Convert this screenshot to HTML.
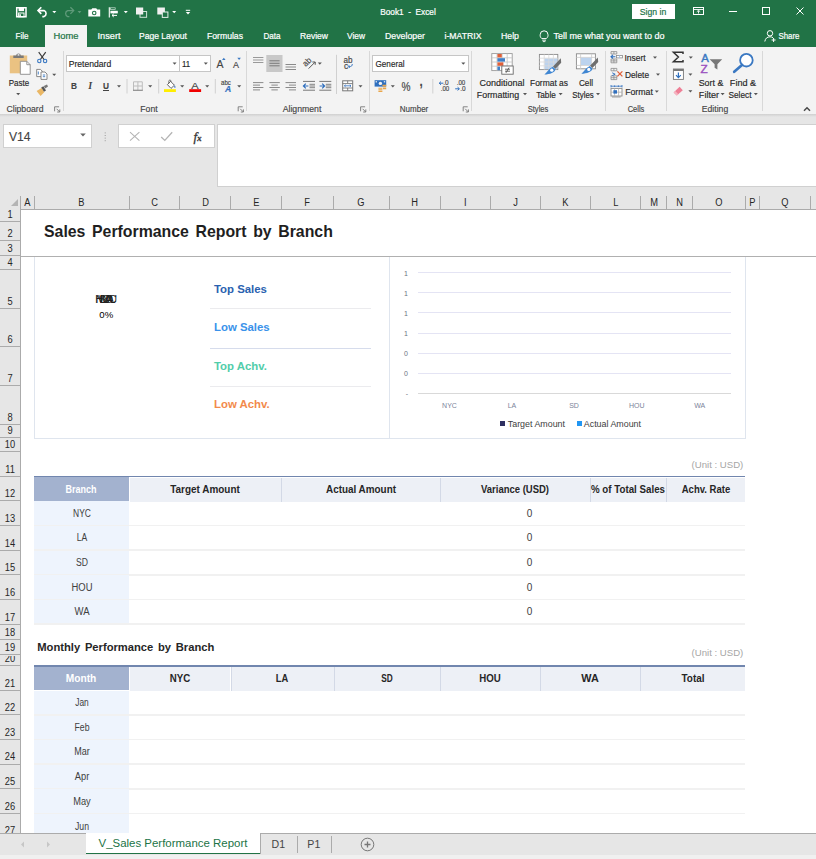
<!DOCTYPE html><html><head><meta charset="utf-8"><title>Book1 - Excel</title><style>
*{box-sizing:border-box;margin:0;padding:0}
html,body{width:816px;height:859px;overflow:hidden;background:#fff}
body{font-family:"Liberation Sans",sans-serif;position:relative;color:#262626}
.a{position:absolute;white-space:nowrap}
.t{position:absolute;white-space:nowrap;line-height:1;transform-origin:0 50%}
.c{position:absolute;white-space:nowrap;line-height:1;text-align:center}
.rb{font-size:8.6px;color:#262626;-webkit-text-stroke:0.15px currentColor}
.tab{font-size:8.6px;color:#fff;-webkit-text-stroke:0.2px currentColor}
.colh{position:absolute;top:195.6px;height:14px;font-size:10px;color:#262626;text-align:center;line-height:14px;border-right:1px solid #ababab}
.rowh{position:absolute;left:0;width:21px;font-size:10px;color:#262626;text-align:center;border-bottom:1px solid #ababab;overflow:hidden}
.rowh span{position:absolute;left:0;width:20px;bottom:1.1px;line-height:1;transform:scaleX(.93)}
.sx{display:inline-block;transform:scaleX(.93)}
.hd{position:absolute;background:#edf0f6}
.hdt{font-size:10px;font-weight:bold;color:#262626}
.bc{position:absolute;background:#eef4fd}
.bct{font-size:10px;color:#404040}
</style></head><body>
<div class="a" style="left:0;top:0;width:816px;height:47px;background:#217346"></div>
<div class="a" style="left:45px;top:25px;width:42px;height:23px;background:#f3f3f3"></div>
<div class="a" style="left:0;top:47px;width:816px;height:68px;background:#f3f3f3;border-bottom:1px solid #d4d4d4"></div>
<div class="a" style="left:0;top:115px;width:816px;height:94px;background:#e6e6e6"></div>
<div class="a" style="left:0;top:113.8px;width:816px;height:3.2px;background:linear-gradient(#d0d0d0,#e6e6e6)"></div>
<div class="c tab" style="left:307.75px;width:200px;top:12px;transform:translateY(-50%) scaleX(0.96);">Book1&nbsp; -&nbsp; Excel</div>
<div class="a" style="left:632px;top:4px;width:43px;height:15px;background:#fff"></div>
<div class="c tab" style="left:552.95px;width:200px;top:11.5px;transform:translateY(-50%) scaleX(0.903);color:#217346;font-size:9.6px">Sign in</div>
<div class="c tab" style="left:-78.5px;width:200px;top:36px;transform:translateY(-50%) scaleX(0.938);color:#fff">File</div>
<div class="c tab" style="left:-34.5px;width:200px;top:36px;transform:translateY(-50%) scaleX(1.09);color:#217346">Home</div>
<div class="c tab" style="left:8.5px;width:200px;top:36px;transform:translateY(-50%) scaleX(1.07);color:#fff">Insert</div>
<div class="c tab" style="left:63.0px;width:200px;top:36px;transform:translateY(-50%) scaleX(0.994);color:#fff">Page Layout</div>
<div class="c tab" style="left:125.0px;width:200px;top:36px;transform:translateY(-50%) scaleX(1.005);color:#fff">Formulas</div>
<div class="c tab" style="left:171.5px;width:200px;top:36px;transform:translateY(-50%) scaleX(0.936);color:#fff">Data</div>
<div class="c tab" style="left:214.0px;width:200px;top:36px;transform:translateY(-50%) scaleX(0.993);color:#fff">Review</div>
<div class="c tab" style="left:256.0px;width:200px;top:36px;transform:translateY(-50%) scaleX(0.974);color:#fff">View</div>
<div class="c tab" style="left:305.0px;width:200px;top:36px;transform:translateY(-50%) scaleX(1.021);color:#fff">Developer</div>
<div class="c tab" style="left:362.5px;width:200px;top:36px;transform:translateY(-50%) scaleX(1.011);color:#fff">i-MATRIX</div>
<div class="c tab" style="left:410.0px;width:200px;top:36px;transform:translateY(-50%) scaleX(1.018);color:#fff">Help</div>
<div class="c tab" style="left:508.5px;width:200px;top:36px;transform:translateY(-50%) scaleX(1.047);color:#fff">Tell me what you want to do</div>
<div class="c tab" style="left:688.5px;width:200px;top:36px;transform:translateY(-50%) scaleX(0.916);color:#fff">Share</div>
<div class="c rb" style="left:-74.55px;width:200px;top:109px;transform:translateY(-50%) scaleX(1.008);color:#444">Clipboard</div>
<div class="c rb" style="left:48.650000000000006px;width:200px;top:109px;transform:translateY(-50%) scaleX(1.006);color:#444">Font</div>
<div class="c rb" style="left:202.14999999999998px;width:200px;top:109px;transform:translateY(-50%) scaleX(1.013);color:#444">Alignment</div>
<div class="c rb" style="left:314.3px;width:200px;top:109px;transform:translateY(-50%) scaleX(0.935);color:#444">Number</div>
<div class="c rb" style="left:438.15px;width:200px;top:109px;transform:translateY(-50%) scaleX(0.884);color:#444">Styles</div>
<div class="c rb" style="left:535.65px;width:200px;top:109px;transform:translateY(-50%) scaleX(0.874);color:#444">Cells</div>
<div class="c rb" style="left:614.8px;width:200px;top:109px;transform:translateY(-50%) scaleX(1.005);color:#444">Editing</div>
<div class="c rb" style="left:-81.25px;width:200px;top:83.3px;transform:translateY(-50%) scaleX(0.932);">Paste</div>
<div class="a" style="left:62.6px;top:50.5px;width:1px;height:60.5px;background:#d8d8d8"></div>
<div class="a" style="left:246.3px;top:50.5px;width:1px;height:60.5px;background:#d8d8d8"></div>
<div class="a" style="left:368.5px;top:50.5px;width:1px;height:60.5px;background:#d8d8d8"></div>
<div class="a" style="left:471.4px;top:50.5px;width:1px;height:60.5px;background:#d8d8d8"></div>
<div class="a" style="left:605.0px;top:50.5px;width:1px;height:60.5px;background:#d8d8d8"></div>
<div class="a" style="left:666.4px;top:50.5px;width:1px;height:60.5px;background:#d8d8d8"></div>
<div class="a" style="left:762.1px;top:50.5px;width:1px;height:60.5px;background:#d8d8d8"></div>
<div class="a" style="left:66px;top:54.8px;width:113.5px;height:17.2px;background:#fff;border:1px solid #c6c6c6"></div>
<div class="a" style="left:179.5px;top:54.8px;width:31.5px;height:17.2px;background:#fff;border:1px solid #c6c6c6;border-left:none"></div>
<div class="c rb" style="left:-10.25px;width:200px;top:63.9px;transform:translateY(-50%) scaleX(0.999);">Pretendard</div>
<div class="c rb" style="left:86.4px;width:200px;top:63.9px;transform:translateY(-50%) scaleX(0.919);">11</div>
<div class="a" style="left:372px;top:54.8px;width:96.5px;height:17.2px;background:#fff;border:1px solid #c6c6c6"></div>
<div class="c rb" style="left:289.5px;width:200px;top:63.9px;transform:translateY(-50%) scaleX(0.948);">General</div>
<div class="c rb" style="left:-26.200000000000003px;width:200px;top:86px;transform:translateY(-50%) scaleX(0.885);font-weight:bold;font-size:9.4px;color:#444">B</div>
<div class="c" style="left:-9.7px;width:200px;top:85.8px;transform:translateY(-50%);font-style:italic;font-family:'Liberation Serif',serif;font-weight:bold;font-size:10px;color:#444">I</div>
<div class="c rb" style="left:6.200000000000003px;width:200px;top:85.6px;transform:translateY(-50%) scaleX(0.873);font-size:9.5px;color:#444;font-weight:bold">U</div>
<div class="a" style="left:103px;top:90px;width:6.4px;height:1px;background:#444"></div>
<div class="c rb" style="left:119.69999999999999px;width:200px;top:64.2px;transform:translateY(-50%) scaleX(0.953);font-size:11px;color:#444">A</div>
<div class="c rb" style="left:135.6px;width:200px;top:65.2px;transform:translateY(-50%) scaleX(0.997);font-size:9px;color:#444">A</div>
<div class="c rb" style="left:95.10000000000002px;width:200px;top:85.6px;transform:translateY(-50%) scaleX(1.181);font-size:9.4px;color:#444">A</div>
<div class="c rb" style="left:126.1px;width:200px;top:83px;transform:translateY(-50%) scaleX(0.935);font-size:6.5px;color:#444">abc</div>
<div class="c rb" style="left:127.9px;width:200px;top:89.2px;transform:translateY(-50%) scaleX(1.01);font-size:8.5px;color:#2f6fbe;font-weight:bold;font-style:italic">A</div>
<div class="c rb" style="left:207.3px;width:200px;top:61.6px;transform:translateY(-50%) rotate(-45deg) scaleX(.9);font-size:8.6px;color:#444">ab</div>
<div class="c rb" style="left:248.10000000000002px;width:200px;top:60.4px;transform:translateY(-50%) scaleX(0.941);font-size:8.6px;color:#444">ab</div>
<div class="c rb" style="left:245.89999999999998px;width:200px;top:66px;transform:translateY(-50%) scaleX(0.977);font-size:8.6px;color:#444">c</div>
<div class="c rb" style="left:305.7px;width:200px;top:87.2px;transform:translateY(-50%) scaleX(0.843);font-size:12px;color:#444">%</div>
<div class="c rb" style="left:321.20000000000005px;width:200px;top:81.4px;transform:translateY(-50%) scaleX(0.822);font-size:14px;color:#444;font-weight:bold">,</div>
<div class="c rb" style="left:346.3px;width:200px;top:83.4px;transform:translateY(-50%) scaleX(0.996);font-size:6.5px;color:#444">.0</div>
<div class="c rb" style="left:344.7px;width:200px;top:88.6px;transform:translateY(-50%) scaleX(0.951);font-size:6.5px;color:#444">.00</div>
<div class="c rb" style="left:360.7px;width:200px;top:83.4px;transform:translateY(-50%) scaleX(0.951);font-size:6.5px;color:#444">.00</div>
<div class="c rb" style="left:362.5px;width:200px;top:88.6px;transform:translateY(-50%) scaleX(0.996);font-size:6.5px;color:#444">.0</div>
<div class="c rb" style="left:604.5999999999999px;width:200px;top:58.4px;transform:translateY(-50%) scaleX(1.083);font-size:10.5px;color:#3a78c2;-webkit-text-stroke:0.4px #3a78c2">A</div>
<div class="c rb" style="left:604.4px;width:200px;top:68.6px;transform:translateY(-50%) scaleX(1.121);font-size:10.5px;color:#9a4fc0;-webkit-text-stroke:0.4px #9a4fc0">Z</div>
<div class="c rb" style="left:401.9px;width:200px;top:83.3px;transform:translateY(-50%) scaleX(1.047);">Conditional</div>
<div class="c rb" style="left:398.45000000000005px;width:200px;top:95.2px;transform:translateY(-50%) scaleX(1.03);">Formatting</div>
<div class="c rb" style="left:449.0px;width:200px;top:83.3px;transform:translateY(-50%) scaleX(0.982);">Format as</div>
<div class="c rb" style="left:446.15px;width:200px;top:95.2px;transform:translateY(-50%) scaleX(0.959);">Table</div>
<div class="c rb" style="left:485.9px;width:200px;top:83.3px;transform:translateY(-50%) scaleX(0.959);">Cell</div>
<div class="c rb" style="left:482.75px;width:200px;top:95.2px;transform:translateY(-50%) scaleX(0.919);">Styles</div>
<div class="c rb" style="left:535.4px;width:200px;top:57.9px;transform:translateY(-50%) scaleX(0.986);">Insert</div>
<div class="c rb" style="left:536.9px;width:200px;top:74.8px;transform:translateY(-50%) scaleX(0.974);">Delete</div>
<div class="c rb" style="left:538.65px;width:200px;top:91.6px;transform:translateY(-50%) scaleX(1.018);">Format</div>
<div class="c rb" style="left:611.35px;width:200px;top:83.3px;transform:translateY(-50%) scaleX(1.034);">Sort &amp;</div>
<div class="c rb" style="left:609.15px;width:200px;top:95.2px;transform:translateY(-50%) scaleX(1.062);">Filter</div>
<div class="c rb" style="left:643.2px;width:200px;top:83.3px;transform:translateY(-50%) scaleX(1.063);">Find &amp;</div>
<div class="c rb" style="left:640.05px;width:200px;top:95.2px;transform:translateY(-50%) scaleX(0.959);">Select</div>
<div class="a" style="left:3px;top:123.6px;width:89px;height:24.4px;background:#fff;border:1px solid #d0d0d0"></div>
<div class="t rb" style="left:9px;top:136.5px;transform:translateY(-50%) scaleX(0.9);font-size:13.5px;color:#444">V14</div>
<div class="a" style="left:118px;top:123.6px;width:96.8px;height:24.4px;background:#fff;border:1px solid #d0d0d0"></div>
<div class="a" style="left:217.2px;top:123.6px;width:599px;height:63.4px;background:#fff;border:1px solid #d0d0d0;border-right:none"></div>
<div class="t rb" style="left:193.6px;top:135.8px;transform:translateY(-50%) scaleX(1);font-family:'Liberation Serif',serif;font-size:13px;color:#333;-webkit-text-stroke:0.3px #333"><i>f</i><span style="font-size:8.5px;font-style:italic;font-weight:bold">x</span></div>
<div class="a" style="left:0;top:208.6px;width:816px;height:1px;background:#ababab"></div>
<div class="a" style="left:20px;top:196px;width:1px;height:13px;background:#ababab"></div>
<div class="colh" style="left:21px;width:13.899999999999999px"><span class="sx">A</span></div>
<div class="colh" style="left:34.9px;width:94.69999999999999px"><span class="sx">B</span></div>
<div class="colh" style="left:129.6px;width:50.80000000000001px"><span class="sx">C</span></div>
<div class="colh" style="left:180.4px;width:50.69999999999999px"><span class="sx">D</span></div>
<div class="colh" style="left:231.1px;width:51.099999999999994px"><span class="sx">E</span></div>
<div class="colh" style="left:282.2px;width:51.60000000000002px"><span class="sx">F</span></div>
<div class="colh" style="left:333.8px;width:56.0px"><span class="sx">G</span></div>
<div class="colh" style="left:389.8px;width:51.39999999999998px"><span class="sx">H</span></div>
<div class="colh" style="left:441.2px;width:50.0px"><span class="sx">I</span></div>
<div class="colh" style="left:491.2px;width:50.00000000000006px"><span class="sx">J</span></div>
<div class="colh" style="left:541.2px;width:50.0px"><span class="sx">K</span></div>
<div class="colh" style="left:591.2px;width:50.0px"><span class="sx">L</span></div>
<div class="colh" style="left:641.2px;width:26.0px"><span class="sx">M</span></div>
<div class="colh" style="left:667.2px;width:26.299999999999955px"><span class="sx">N</span></div>
<div class="colh" style="left:693.5px;width:52.700000000000045px"><span class="sx">O</span></div>
<div class="colh" style="left:746.2px;width:13.599999999999909px"><span class="sx">P</span></div>
<div class="colh" style="left:759.8px;width:51.10000000000002px"><span class="sx">Q</span></div>
<div class="colh" style="left:810.9px;width:19.100000000000023px"><span class="sx"></span></div>
<svg class="a" style="left:10.6px;top:199.2px" width="7" height="7"><path d="M7 0V7H0Z" fill="#b4b4b4"/></svg>
<div class="a" style="left:21px;top:209.6px;width:795px;height:624px;background:#fff"></div>
<div class="a" style="left:0;top:209px;width:21px;height:624px;background:#e6e6e6;border-right:1px solid #ababab"></div>
<div class="rowh" style="top:209.5px;height:12.400000000000006px"><span>1</span></div>
<div class="rowh" style="top:221.9px;height:19.400000000000006px"><span>2</span></div>
<div class="rowh" style="top:241.3px;height:15.0px"><span>3</span></div>
<div class="rowh" style="top:256.3px;height:13.699999999999989px"><span>4</span></div>
<div class="rowh" style="top:270px;height:38.69999999999999px"><span>5</span></div>
<div class="rowh" style="top:308.7px;height:38.69999999999999px"><span>6</span></div>
<div class="rowh" style="top:347.4px;height:38.700000000000045px"><span>7</span></div>
<div class="rowh" style="top:386.1px;height:38.69999999999999px"><span>8</span></div>
<div class="rowh" style="top:424.8px;height:13.599999999999966px"><span>9</span></div>
<div class="rowh" style="top:438.4px;height:13.900000000000034px"><span>10</span></div>
<div class="rowh" style="top:452.3px;height:24.69999999999999px"><span>11</span></div>
<div class="rowh" style="top:477px;height:24.30000000000001px"><span>12</span></div>
<div class="rowh" style="top:501.3px;height:24.69999999999999px"><span>13</span></div>
<div class="rowh" style="top:526px;height:24.600000000000023px"><span>14</span></div>
<div class="rowh" style="top:550.6px;height:24.699999999999932px"><span>15</span></div>
<div class="rowh" style="top:575.3px;height:24.700000000000045px"><span>16</span></div>
<div class="rowh" style="top:600px;height:24.600000000000023px"><span>17</span></div>
<div class="rowh" style="top:624.6px;height:15.199999999999932px"><span>18</span></div>
<div class="rowh" style="top:639.8px;height:15.700000000000045px"><span>19</span></div>
<div class="rowh" style="top:655.5px;height:10.799999999999955px"><span>20</span></div>
<div class="rowh" style="top:666.3px;height:24.5px"><span>21</span></div>
<div class="rowh" style="top:690.8px;height:24.700000000000045px"><span>22</span></div>
<div class="rowh" style="top:715.5px;height:24.5px"><span>23</span></div>
<div class="rowh" style="top:740px;height:24.5px"><span>24</span></div>
<div class="rowh" style="top:764.5px;height:24.799999999999955px"><span>25</span></div>
<div class="rowh" style="top:789.3px;height:24.5px"><span>26</span></div>
<div class="rowh" style="top:813.8px;height:24.600000000000023px"><span>27</span></div>
<div class="a" style="left:21px;top:255.6px;width:795px;height:1.4px;background:#b0b0b0"></div>
<div class="t " style="left:44px;top:231.7px;transform:translateY(-50%) scaleX(1);font-size:15.85px;font-weight:bold;color:#1f1f1f;word-spacing:2.2px">Sales Performance Report by Branch</div>
<div class="a" style="left:33.7px;top:257px;width:1px;height:181px;background:#dfe5ee"></div>
<div class="a" style="left:388.9px;top:257px;width:1px;height:181px;background:#dfe5ee"></div>
<div class="a" style="left:745px;top:257px;width:1px;height:181px;background:#dfe5ee"></div>
<div class="a" style="left:33.7px;top:437.6px;width:712px;height:1px;background:#dfe5ee"></div>
<div class="c " style="left:6px;width:200px;top:299.6px;transform:translateY(-50%) scaleX(1);font-size:10px;color:#1f1f1f;letter-spacing:-0.2px">NYC</div>
<div class="c " style="left:6px;width:200px;top:299.6px;transform:translateY(-50%) scaleX(1);font-size:10px;color:#1f1f1f;letter-spacing:-0.2px">LA</div>
<div class="c " style="left:6px;width:200px;top:299.6px;transform:translateY(-50%) scaleX(1);font-size:10px;color:#1f1f1f;letter-spacing:-0.2px">SD</div>
<div class="c " style="left:6px;width:200px;top:299.6px;transform:translateY(-50%) scaleX(1);font-size:10px;color:#1f1f1f;letter-spacing:-0.2px">HOU</div>
<div class="c " style="left:6px;width:200px;top:299.6px;transform:translateY(-50%) scaleX(1);font-size:10px;color:#1f1f1f;letter-spacing:-0.2px">WA</div>
<div class="c " style="left:6.299999999999997px;width:200px;top:314.7px;transform:translateY(-50%) scaleX(1);font-size:9.6px;color:#000">0%</div>
<div class="t " style="left:214px;top:289.6px;transform:translateY(-50%) scaleX(1);font-size:11.4px;font-weight:bold;color:#2a62b0">Top Sales</div>
<div class="t " style="left:214px;top:328.1px;transform:translateY(-50%) scaleX(1);font-size:11.4px;font-weight:bold;color:#3a92ea">Low Sales</div>
<div class="t " style="left:214px;top:366.6px;transform:translateY(-50%) scaleX(1);font-size:11.4px;font-weight:bold;color:#52cdaa">Top Achv.</div>
<div class="t " style="left:214px;top:405.1px;transform:translateY(-50%) scaleX(1);font-size:11.4px;font-weight:bold;color:#f28a4c">Low Achv.</div>
<div class="a" style="left:210px;top:308.1px;width:161px;height:1px;background:#ebebee"></div>
<div class="a" style="left:210px;top:347.6px;width:161px;height:1px;background:#d6dcec"></div>
<div class="a" style="left:210px;top:385.8px;width:161px;height:1px;background:#ebebee"></div>
<div class="a" style="left:418px;top:272.2px;width:313px;height:1px;background:#e4e4f4"></div>
<div class="t" style="left:396px;width:12px;text-align:right;top:272.7px;transform:translateY(-50%);font-size:7px;color:#6b7280">1</div>
<div class="a" style="left:418px;top:292.3px;width:313px;height:1px;background:#e4e4f4"></div>
<div class="t" style="left:396px;width:12px;text-align:right;top:292.8px;transform:translateY(-50%);font-size:7px;color:#6b7280">1</div>
<div class="a" style="left:418px;top:312.4px;width:313px;height:1px;background:#e4e4f4"></div>
<div class="t" style="left:396px;width:12px;text-align:right;top:312.9px;transform:translateY(-50%);font-size:7px;color:#6b7280">1</div>
<div class="a" style="left:418px;top:332.5px;width:313px;height:1px;background:#e4e4f4"></div>
<div class="t" style="left:396px;width:12px;text-align:right;top:333px;transform:translateY(-50%);font-size:7px;color:#6b7280">1</div>
<div class="a" style="left:418px;top:352.5px;width:313px;height:1px;background:#e4e4f4"></div>
<div class="t" style="left:396px;width:12px;text-align:right;top:353px;transform:translateY(-50%);font-size:7px;color:#6b7280">0</div>
<div class="a" style="left:418px;top:372.7px;width:313px;height:1px;background:#e4e4f4"></div>
<div class="t" style="left:396px;width:12px;text-align:right;top:373.2px;transform:translateY(-50%);font-size:7px;color:#6b7280">0</div>
<div class="a" style="left:418px;top:392.7px;width:313px;height:1px;background:#d9d9d9"></div>
<div class="t" style="left:396px;width:12px;text-align:right;top:393.2px;transform:translateY(-50%);font-size:7px;color:#6b7280">-</div>
<div class="c " style="left:349.5px;width:200px;top:404.5px;transform:translateY(-50%) scaleX(1);font-size:7px;color:#7b849a">NYC</div>
<div class="c " style="left:412px;width:200px;top:404.5px;transform:translateY(-50%) scaleX(1);font-size:7px;color:#7b849a">LA</div>
<div class="c " style="left:474px;width:200px;top:404.5px;transform:translateY(-50%) scaleX(1);font-size:7px;color:#7b849a">SD</div>
<div class="c " style="left:536.7px;width:200px;top:404.5px;transform:translateY(-50%) scaleX(1);font-size:7px;color:#7b849a">HOU</div>
<div class="c " style="left:599.7px;width:200px;top:404.5px;transform:translateY(-50%) scaleX(1);font-size:7px;color:#7b849a">WA</div>
<div class="a" style="left:500.3px;top:421.3px;width:5px;height:5px;background:#2f3061"></div>
<div class="t " style="left:507.8px;top:423.7px;transform:translateY(-50%) scaleX(1);font-size:8.9px;color:#404040">Target Amount</div>
<div class="a" style="left:577px;top:421.3px;width:4.6px;height:5px;background:#2196f3"></div>
<div class="t " style="left:583.8px;top:423.7px;transform:translateY(-50%) scaleX(1);font-size:8.9px;color:#404040">Actual Amount</div>
<div class="hd" style="left:33.8px;top:477px;width:95.00000000000001px;height:23.900000000000013px;background:#a3b2cf"></div>
<div class="c hdt" style="left:-18.69999999999999px;width:200px;top:489.95px;transform:translateY(-50%) scaleX(0.9);color:#fff">Branch</div>
<div class="hd" style="left:128.8px;top:477.9px;width:152.2px;height:23.80000000000001px;border-left:1px solid #fff"></div>
<div class="c hdt" style="left:105.20000000000002px;width:200px;top:489.95px;transform:translateY(-50%) scaleX(0.993);">Target Amount</div>
<div class="hd" style="left:281px;top:477.9px;width:159.3px;height:23.80000000000001px;border-left:1px solid #d3d9e6"></div>
<div class="c hdt" style="left:260.95px;width:200px;top:489.95px;transform:translateY(-50%) scaleX(0.989);">Actual Amount</div>
<div class="hd" style="left:440.3px;top:477.9px;width:149.7px;height:23.80000000000001px;border-left:1px solid #d3d9e6"></div>
<div class="c hdt" style="left:415.44999999999993px;width:200px;top:489.95px;transform:translateY(-50%) scaleX(0.948);">Variance (USD)</div>
<div class="hd" style="left:590px;top:477.9px;width:76.29999999999995px;height:23.80000000000001px;border-left:1px solid #d3d9e6"></div>
<div class="c hdt" style="left:528.4499999999999px;width:200px;top:489.95px;transform:translateY(-50%) scaleX(0.974);">% of Total Sales</div>
<div class="hd" style="left:666.3px;top:477.9px;width:79.10000000000002px;height:23.80000000000001px;border-left:1px solid #d3d9e6"></div>
<div class="c hdt" style="left:606.1499999999999px;width:200px;top:489.95px;transform:translateY(-50%) scaleX(0.952);">Achv. Rate</div>
<div class="a" style="left:33.8px;top:475.5px;width:711.6px;height:1.8px;background:#7186ae"></div>
<div class="bc" style="left:33.8px;top:501.3px;width:95.00000000000001px;height:24.69999999999999px"></div>
<div class="c bct" style="left:-18.299999999999983px;width:200px;top:513.65px;transform:translateY(-50%) scaleX(0.843);">NYC</div>
<div class="a" style="left:33.8px;top:524.8px;width:711.6px;height:1.7px;background:#f1f1f1"></div>
<div class="c " style="left:429.5px;width:200px;top:513.65px;transform:translateY(-50%) scaleX(1);font-size:10px;color:#404040">0</div>
<div class="bc" style="left:33.8px;top:526px;width:95.00000000000001px;height:24.600000000000023px"></div>
<div class="c bct" style="left:-18.299999999999983px;width:200px;top:538.3px;transform:translateY(-50%) scaleX(0.858);">LA</div>
<div class="a" style="left:33.8px;top:549.4px;width:711.6px;height:1.7px;background:#f1f1f1"></div>
<div class="c " style="left:429.5px;width:200px;top:538.3px;transform:translateY(-50%) scaleX(1);font-size:10px;color:#404040">0</div>
<div class="bc" style="left:33.8px;top:550.6px;width:95.00000000000001px;height:24.699999999999932px"></div>
<div class="c bct" style="left:-18.299999999999983px;width:200px;top:562.95px;transform:translateY(-50%) scaleX(0.863);">SD</div>
<div class="a" style="left:33.8px;top:574.0999999999999px;width:711.6px;height:1.7px;background:#f1f1f1"></div>
<div class="c " style="left:429.5px;width:200px;top:562.95px;transform:translateY(-50%) scaleX(1);font-size:10px;color:#404040">0</div>
<div class="bc" style="left:33.8px;top:575.3px;width:95.00000000000001px;height:24.700000000000045px"></div>
<div class="c bct" style="left:-18.299999999999983px;width:200px;top:587.65px;transform:translateY(-50%) scaleX(0.944);">HOU</div>
<div class="a" style="left:33.8px;top:598.8px;width:711.6px;height:1.7px;background:#f1f1f1"></div>
<div class="c " style="left:429.5px;width:200px;top:587.65px;transform:translateY(-50%) scaleX(1);font-size:10px;color:#404040">0</div>
<div class="bc" style="left:33.8px;top:600px;width:95.00000000000001px;height:24.600000000000023px"></div>
<div class="c bct" style="left:-18.299999999999983px;width:200px;top:612.3px;transform:translateY(-50%) scaleX(0.952);">WA</div>
<div class="a" style="left:33.8px;top:623.4px;width:711.6px;height:1.7px;background:#f1f1f1"></div>
<div class="c " style="left:429.5px;width:200px;top:612.3px;transform:translateY(-50%) scaleX(1);font-size:10px;color:#404040">0</div>
<div class="t " style="left:691.6px;top:464.5px;transform:translateY(-50%) scaleX(1);font-size:9.6px;color:#a6a6a6">(Unit : USD)</div>
<div class="t " style="left:37.3px;top:647.5px;transform:translateY(-50%) scaleX(1);font-size:11.2px;font-weight:bold;color:#262626;word-spacing:1.6px">Monthly Performance by Branch</div>
<div class="hd" style="left:33.8px;top:666.3px;width:95.00000000000001px;height:24.1px;background:#a3b2cf"></div>
<div class="c hdt" style="left:-18.69999999999999px;width:200px;top:679.3499999999999px;transform:translateY(-50%) scaleX(1.02);color:#fff">Month</div>
<div class="hd" style="left:128.8px;top:667.1999999999999px;width:101.69999999999999px;height:24.0px;border-left:1px solid #fff"></div>
<div class="c hdt" style="left:79.95000000000002px;width:200px;top:679.3499999999999px;transform:translateY(-50%) scaleX(0.97);">NYC</div>
<div class="hd" style="left:230.5px;top:667.1999999999999px;width:103.19999999999999px;height:24.0px;border-left:1px solid #d3d9e6"></div>
<div class="c hdt" style="left:182.40000000000003px;width:200px;top:679.3499999999999px;transform:translateY(-50%) scaleX(0.937);">LA</div>
<div class="hd" style="left:333.7px;top:667.1999999999999px;width:106.60000000000002px;height:24.0px;border-left:1px solid #d3d9e6"></div>
<div class="c hdt" style="left:287.3px;width:200px;top:679.3499999999999px;transform:translateY(-50%) scaleX(0.827);">SD</div>
<div class="hd" style="left:440.3px;top:667.1999999999999px;width:99.69999999999999px;height:24.0px;border-left:1px solid #d3d9e6"></div>
<div class="c hdt" style="left:390.45px;width:200px;top:679.3499999999999px;transform:translateY(-50%) scaleX(0.967);">HOU</div>
<div class="hd" style="left:540px;top:667.1999999999999px;width:100px;height:24.0px;border-left:1px solid #d3d9e6"></div>
<div class="c hdt" style="left:490.29999999999995px;width:200px;top:679.3499999999999px;transform:translateY(-50%) scaleX(1.086);">WA</div>
<div class="hd" style="left:640px;top:667.1999999999999px;width:105.39999999999998px;height:24.0px;border-left:1px solid #d3d9e6"></div>
<div class="c hdt" style="left:593.0px;width:200px;top:679.3499999999999px;transform:translateY(-50%) scaleX(0.993);">Total</div>
<div class="a" style="left:33.8px;top:664.8px;width:711.6px;height:1.8px;background:#7186ae"></div>
<div class="bc" style="left:33.8px;top:690.8px;width:95.00000000000001px;height:24.700000000000045px"></div>
<div class="c bct" style="left:-18.299999999999983px;width:200px;top:703.15px;transform:translateY(-50%) scaleX(0.837);">Jan</div>
<div class="a" style="left:33.8px;top:714.3px;width:711.6px;height:1.7px;background:#f1f1f1"></div>
<div class="bc" style="left:33.8px;top:715.5px;width:95.00000000000001px;height:24.5px"></div>
<div class="c bct" style="left:-18.299999999999983px;width:200px;top:727.75px;transform:translateY(-50%) scaleX(0.87);">Feb</div>
<div class="a" style="left:33.8px;top:738.8px;width:711.6px;height:1.7px;background:#f1f1f1"></div>
<div class="bc" style="left:33.8px;top:740px;width:95.00000000000001px;height:24.5px"></div>
<div class="c bct" style="left:-18.299999999999983px;width:200px;top:752.25px;transform:translateY(-50%) scaleX(0.899);">Mar</div>
<div class="a" style="left:33.8px;top:763.3px;width:711.6px;height:1.7px;background:#f1f1f1"></div>
<div class="bc" style="left:33.8px;top:764.5px;width:95.00000000000001px;height:24.799999999999955px"></div>
<div class="c bct" style="left:-18.299999999999983px;width:200px;top:776.9px;transform:translateY(-50%) scaleX(0.932);">Apr</div>
<div class="a" style="left:33.8px;top:788.0999999999999px;width:711.6px;height:1.7px;background:#f1f1f1"></div>
<div class="bc" style="left:33.8px;top:789.3px;width:95.00000000000001px;height:24.5px"></div>
<div class="c bct" style="left:-18.299999999999983px;width:200px;top:801.55px;transform:translateY(-50%) scaleX(0.926);">May</div>
<div class="a" style="left:33.8px;top:812.5999999999999px;width:711.6px;height:1.7px;background:#f1f1f1"></div>
<div class="bc" style="left:33.8px;top:813.8px;width:95.00000000000001px;height:26.200000000000045px"></div>
<div class="c bct" style="left:-18.299999999999983px;width:200px;top:826.9px;transform:translateY(-50%) scaleX(0.868);">Jun</div>
<div class="a" style="left:33.8px;top:838.8px;width:711.6px;height:1.7px;background:#f1f1f1"></div>
<div class="t " style="left:691.6px;top:652.5px;transform:translateY(-50%) scaleX(1);font-size:9.6px;color:#a6a6a6">(Unit : USD)</div>
<div class="a" style="left:0;top:833px;width:816px;height:26px;background:#e6e6e6;border-top:1px solid #ababab"></div>
<div class="a" style="left:0;top:855.4px;width:816px;height:4px;background:#f0f0f0"></div>
<div class="a" style="left:86px;top:833px;width:174px;height:21.2px;background:#fff;border-bottom:1.5px solid #217346"></div>
<div class="c " style="left:73px;width:200px;top:844px;transform:translateY(-50%) scaleX(1);font-size:11.46px;color:#217346">V_Sales Performance Report</div>
<div class="c " style="left:178.3px;width:200px;top:844px;transform:translateY(-50%) scaleX(1);font-size:10.6px;color:#444">D1</div>
<div class="c " style="left:213.8px;width:200px;top:844px;transform:translateY(-50%) scaleX(1);font-size:10.6px;color:#444">P1</div>
<div class="a" style="left:296.5px;top:836px;width:1px;height:17px;background:#ababab"></div>
<div class="a" style="left:330.5px;top:836px;width:1px;height:17px;background:#ababab"></div>
<div class="a" style="left:260px;top:833px;width:1px;height:21px;background:#ababab"></div>
<svg class="a" style="left:360px;top:837px" width="15" height="15" viewBox="0 0 15 15"><circle cx="7.5" cy="7.5" r="6.3" fill="none" stroke="#767676" stroke-width="1"/><path d="M4.5 7.5H10.5M7.5 4.5V10.5" stroke="#767676" stroke-width="1.3"/></svg>
<svg class="a" style="left:20px;top:840px" width="32" height="9" viewBox="0 0 32 9"><path d="M4 1.5L1 4.5L4 7.5Z M27 1.5L30 4.5L27 7.5Z" fill="#c6c6c6"/></svg>
<svg class="a" style="left:0;top:0" width="816" height="150" viewBox="0 0 816 150">
<path d="M16.7 7.7H26V16.7H16.7Z" fill="none" stroke="#fff" stroke-width="1.5"/><rect x="18.6" y="7.5" width="5.4" height="3.6" fill="#fff"/><rect x="18.6" y="13" width="5.4" height="3.8" fill="none" stroke="#fff" stroke-width="1"/><rect x="19.3" y="14.2" width="1.6" height="2.6" fill="#fff"/>
<path d="M41.3 7.3L38 10.6L41.3 13.9" fill="none" stroke="#fff" stroke-width="1.6"/><path d="M38.3 10.6H44A3.2 3.2 0 0 1 44 16.6H42.3" fill="none" stroke="#fff" stroke-width="1.6"/>
<path d="M52.3 11L56.3 11L54.3 13.2Z" fill="#fff"/>
<path d="M70.4 7.3L73.7 10.6L70.4 13.9" fill="none" stroke="#5f9a7a" stroke-width="1.3"/><path d="M73.4 10.6H67.7A3.2 3.2 0 0 0 67.7 16.6H69.4" fill="none" stroke="#5f9a7a" stroke-width="1.3"/>
<path d="M77.6 11L81.4 11L79.5 13.2Z" fill="#5f9a7a"/>
<path d="M88.3 9.6H91.3L92.3 8.2H96.2L97.2 9.6H100.2V16.5H88.3Z" fill="#fff"/><circle cx="94.2" cy="13" r="2.3" fill="#217346"/><circle cx="94.2" cy="13" r="1.2" fill="#fff"/>
<path d="M109.3 7.3V17.5" stroke="#fff" stroke-width="1.1"/><rect x="110.6" y="7.8" width="4.6" height="1.8" fill="none" stroke="#cfe3d7" stroke-width=".7"/><rect x="110.4" y="10.8" width="7.4" height="2.6" fill="#fff"/><path d="M117 15.4H112M113.8 13.8L112 15.4L113.8 17" fill="none" stroke="#fff" stroke-width="1"/>
<path d="M123.8 11L127.8 11L125.8 13.2Z" fill="#fff"/>
<rect x="140" y="11.5" width="6.6" height="5.8" fill="none" stroke="#cfe3d7" stroke-width="1"/><rect x="136" y="7.5" width="7.2" height="7" fill="#f0f0f0"/>
<rect x="157.3" y="7.5" width="7.6" height="7" fill="#f0f0f0"/><rect x="162.3" y="12" width="5.6" height="5.4" fill="#217346" stroke="#e6f0ea" stroke-width="1"/>
<path d="M172.2 11L176.2 11L174.2 13.2Z" fill="#fff"/>
<path d="M185.8 10.3H190.2" stroke="#fff" stroke-width="1"/><path d="M185.8 12L190.2 12L188 14.4Z" fill="#fff"/>
<rect x="693.5" y="7.5" width="10" height="7" fill="none" stroke="#fff" stroke-width="1"/><path d="M693.5 9.5H703.5M698.5 10.5V13.5M696.8 11.8L698.5 10.2L700.2 11.8" fill="none" stroke="#fff" stroke-width=".9"/>
<path d="M729 11.5H737" stroke="#fff" stroke-width="1"/>
<rect x="762.5" y="7.5" width="7" height="7" fill="none" stroke="#fff" stroke-width="1"/>
<path d="M796.5 7.5L803.5 14.5M803.5 7.5L796.5 14.5" stroke="#fff" stroke-width="1"/>
<path d="M541.8 38.6C540.3 37.4 540 36 540.2 34.7A3.9 3.9 0 0 1 548 34.7C548.2 36 547.7 37.4 546.3 38.6Z" fill="none" stroke="#fff" stroke-width="1"/><path d="M542.2 40.2H546M542.8 41.6H545.4" stroke="#fff" stroke-width=".9"/>
<circle cx="770" cy="33.3" r="2.7" fill="none" stroke="#fff" stroke-width="1"/><path d="M764.8 41.5C765.3 38.3 767.3 36.8 770 36.8C771.2 36.8 772.2 37.1 773 37.7" fill="none" stroke="#fff" stroke-width="1"/><path d="M773.6 38V42M771.6 40H775.6" stroke="#fff" stroke-width="1"/>
<rect x="9.8" y="55.5" width="17.4" height="17.8" fill="#eac282"/>
<path d="M13.3 58V55.6H16.2C16.2 52.9 20.8 52.9 20.8 55.6H23.7V58Z" fill="#7a7a7a"/><rect x="17.6" y="54.2" width="1.8" height="1.4" fill="#f3f3f3"/>
<path d="M20.3 61.3H26.8L30.2 64.7V74.3H20.3Z" fill="#fff" stroke="#8a8a8a" stroke-width=".9"/><path d="M26.8 61.3V64.7H30.2" fill="none" stroke="#8a8a8a" stroke-width=".9"/>
<path d="M16.2 93L20.2 93L18.2 95.2Z" fill="#555"/>
<path d="M38.7 52.2L44.4 60M45.7 52.2L40 60" stroke="#3b3b3b" stroke-width="1.2" fill="none"/><circle cx="39.3" cy="61" r="1.7" fill="none" stroke="#3a78c2" stroke-width="1.1"/><circle cx="45.1" cy="61" r="1.7" fill="none" stroke="#3a78c2" stroke-width="1.1"/>
<path d="M36.7 69.4H40.5L42.3 71.2V76.6H36.7Z" fill="#fff" stroke="#7a7a7a" stroke-width=".9"/><path d="M41 72H45L47 74V79.4H41Z" fill="#fff" stroke="#7a7a7a" stroke-width=".9"/><path d="M38.3 71.5V74.5M42.8 75H45.2M42.8 76.7H45.2" stroke="#3a78c2" stroke-width=".9"/>
<path d="M52.2 73.7L56.2 73.7L54.2 75.9Z" fill="#555"/>
<path d="M36.6 91L41.6 88L44.2 92.2L40.6 96Z" fill="#eab765"/><path d="M41.2 87.6L43.4 86.2L46 90.4L44 91.8Z" fill="#555"/><path d="M43.8 86L47 84.6L48 86.4L45.2 88.4Z" fill="#777"/>
<path d="M59.1 106.8H54.6V111.3" fill="none" stroke="#777" stroke-width=".9"/><path d="M56.6 108.8L59.6 111.8M59.800000000000004 109.39999999999999V112.0H57.2" fill="none" stroke="#777" stroke-width=".9"/>
<path d="M172.6 62.6L176.6 62.6L174.6 64.8Z" fill="#555"/>
<path d="M203.8 62.6L207.8 62.6L205.8 64.8Z" fill="#555"/>
<path d="M222 60L223.8 57.8L225.6 60Z" fill="#3a78c2"/><path d="M237.3 57.8L240.9 57.8L239.1 60Z" fill="#3a78c2"/>
<path d="M117 85.2L121 85.2L119 87.4Z" fill="#555"/>
<path d="M127 79V93.5M158.7 79V93.5M215.3 79V93.5" stroke="#d0d0d0" stroke-width="1"/>
<path d="M133.5 81.8H142.3V90.2M133.5 81.8V90.2M137.9 81.8V90.2M133.5 86H142.3" fill="none" stroke="#bdbdbd" stroke-width="1"/><path d="M133 90.3H142.8" stroke="#8c8c8c" stroke-width="1.2"/>
<path d="M148.2 85.2L152.2 85.2L150.2 87.4Z" fill="#555"/>
<path d="M167.4 84.6L170.6 81.4L174.4 85.2L171 88.4Z" fill="#fff" stroke="#555" stroke-width=".9"/><path d="M168.8 83.4V81.2C168.8 79.6 171 79.6 171 81.2V82" fill="none" stroke="#555" stroke-width=".8"/><path d="M174.6 85.2C175.8 86.4 175.8 87.6 175 88C174 87.6 174 86.4 174.6 85.2Z" fill="#3a78c2"/><rect x="164" y="89.2" width="11.9" height="2.8" fill="#ffee00"/>
<path d="M180.2 85.2L184.2 85.2L182.2 87.4Z" fill="#555"/>
<rect x="189.2" y="89.2" width="11.9" height="2.8" fill="#f00000"/>
<path d="M205.2 85.2L209.2 85.2L207.2 87.4Z" fill="#555"/>
<path d="M237.2 85.2L241.2 85.2L239.2 87.4Z" fill="#555"/>
<path d="M242.7 106.8H238.2V111.3" fill="none" stroke="#777" stroke-width=".9"/><path d="M240.2 108.8L243.2 111.8M243.39999999999998 109.39999999999999V112.0H240.79999999999998" fill="none" stroke="#777" stroke-width=".9"/>
<path d="M253 57.5H263.4" stroke="#999" stroke-width="1"/>
<path d="M253 60H263.4" stroke="#999" stroke-width="1"/>
<path d="M253 62.5H263.4" stroke="#999" stroke-width="1"/>
<rect x="266.3" y="55" width="16.2" height="17" fill="#c8c8c8"/>
<path d="M269.4 60.8H279.6" stroke="#7a7a7a" stroke-width="1"/>
<path d="M269.4 63.3H279.6" stroke="#7a7a7a" stroke-width="1"/>
<path d="M269.4 65.8H279.6" stroke="#7a7a7a" stroke-width="1"/>
<path d="M285.5 64.5H296" stroke="#8a8a8a" stroke-width="1"/>
<path d="M285.5 67H296" stroke="#8a8a8a" stroke-width="1"/>
<path d="M285.5 69.5H296" stroke="#8a8a8a" stroke-width="1"/>
<path d="M308.6 68.6L315 62.2M312.4 62H315.2V64.8" fill="none" stroke="#555" stroke-width="1"/>
<path d="M317.8 62.6L321.8 62.6L319.8 64.8Z" fill="#555"/>
<path d="M336.5 54.8V94" stroke="#d0d0d0" stroke-width="1"/>
<path d="M253 82.6H263.4M269.4 82.6H279.8M285.5 82.6H296" stroke="#8a8a8a" stroke-width="1"/>
<path d="M253 85.1H260M271.4 85.1H277.8M289 85.1H296" stroke="#8a8a8a" stroke-width="1"/>
<path d="M253 87.5H263.4M269.4 87.5H279.8M285.5 87.5H296" stroke="#8a8a8a" stroke-width="1"/>
<path d="M253 89.9H260M271.4 89.9H277.8M289 89.9H296" stroke="#8a8a8a" stroke-width="1"/>
<path d="M303 81.4H315" stroke="#777" stroke-width="1"/>
<path d="M303 90.2H315" stroke="#777" stroke-width="1"/>
<path d="M309.5 84.3H315" stroke="#777" stroke-width="0.9"/>
<path d="M309.5 86H315" stroke="#777" stroke-width="0.9"/>
<path d="M309.5 87.7H315" stroke="#777" stroke-width="0.9"/>
<path d="M308.4 86H303.6M305.8 83.6L303.4 86L305.8 88.4" fill="none" stroke="#2f6fbe" stroke-width="1.2"/>
<path d="M319.3 81.4H331.3" stroke="#777" stroke-width="1"/>
<path d="M319.3 90.2H331.3" stroke="#777" stroke-width="1"/>
<path d="M325.8 84.3H331.3" stroke="#777" stroke-width="0.9"/>
<path d="M325.8 86H331.3" stroke="#777" stroke-width="0.9"/>
<path d="M325.8 87.7H331.3" stroke="#777" stroke-width="0.9"/>
<path d="M319.6 86H324.4M322.2 83.6L324.6 86L322.2 88.4" fill="none" stroke="#2f6fbe" stroke-width="1.2"/>
<path d="M349 66.6C351.6 66.8 352.6 65.4 352.2 64M349.2 65.2L348.2 66.6L350 67.6" fill="none" stroke="#2f6fbe" stroke-width=".9"/>
<rect x="342.7" y="80.8" width="10" height="10" fill="#fff" stroke="#777" stroke-width="1"/><path d="M342.7 83.6H352.7M342.7 88H352.7M347.7 80.8V83.6M347.7 88V90.8" stroke="#777" stroke-width=".9"/><path d="M344.4 85.8H351M345.6 84.8L344.4 85.8L345.6 86.8M349.8 84.8L351 85.8L349.8 86.8" fill="none" stroke="#2f6fbe" stroke-width=".8"/>
<path d="M358.5 85.2L362.5 85.2L360.5 87.4Z" fill="#555"/>
<path d="M365.1 106.8H360.6V111.3" fill="none" stroke="#777" stroke-width=".9"/><path d="M362.6 108.8L365.6 111.8M365.8 109.39999999999999V112.0H363.20000000000005" fill="none" stroke="#777" stroke-width=".9"/>
<path d="M461.3 62.6L465.3 62.6L463.3 64.8Z" fill="#555"/>
<rect x="374.6" y="80.2" width="11.6" height="6.4" fill="#2f6fbe"/><circle cx="380.4" cy="83.4" r="1.7" fill="#f3f3f3"/><rect x="375.6" y="81.2" width="1.4" height="1.2" fill="#f3f3f3"/><rect x="383.8" y="81.2" width="1.4" height="1.2" fill="#f3f3f3"/>
<path d="M378.4 88.2H382.4M378.4 89.8H382.4M378.4 91.4H382.4M382.4 85.4H386.2M382.8 87H386.2M383 88.6H386.2" stroke="#eaa64a" stroke-width="1.1"/>
<path d="M390.8 85.2L394.8 85.2L392.8 87.4Z" fill="#555"/>
<path d="M432.8 79V93.5" stroke="#d0d0d0" stroke-width="1"/>
<path d="M443.4 83.2H439.4M441 81.6L439.2 83.2L441 84.8" fill="none" stroke="#2f6fbe" stroke-width="1"/>
<path d="M455.2 88.8H459.2M457.6 87.2L459.4 88.8L457.6 90.4" fill="none" stroke="#2f6fbe" stroke-width="1"/>
<path d="M467.7 106.8H463.2V111.3" fill="none" stroke="#777" stroke-width=".9"/><path d="M465.2 108.8L468.2 111.8M468.4 109.39999999999999V112.0H465.8" fill="none" stroke="#777" stroke-width=".9"/>
<rect x="491.8" y="53.6" width="20.4" height="17" fill="#fff" stroke="#9a9a9a" stroke-width=".9"/>
<path d="M491.8 57.8H512.2M491.8 62H512.2M491.8 66.2H512.2M497 53.6V70.6M502.2 53.6V70.6M507.2 53.6V70.6" stroke="#c4c4c4" stroke-width=".8"/>
<rect x="497.4" y="54" width="4.4" height="3.4" fill="#e0603a"/><rect x="497.4" y="58.2" width="7.6" height="3.4" fill="#3f7fc8"/><rect x="497.4" y="62.4" width="6" height="3.4" fill="#e0603a"/><rect x="497.4" y="66.6" width="2.6" height="3.6" fill="#3f7fc8"/>
<rect x="501.8" y="66" width="11.4" height="8.2" fill="#fff" stroke="#6a6a6a" stroke-width=".9"/><path d="M505 69.2H510M505 71.2H510M509 67.6L506 72.8" stroke="#444" stroke-width=".8"/>
<path d="M523 93L527 93L525 95.2Z" fill="#555"/>
<rect x="539.4" y="54.4" width="18.4" height="15.2" fill="#fff" stroke="#8a8a8a" stroke-width=".9"/><rect x="544.4" y="58.4" width="13" height="10.8" fill="#bcd3ee"/><path d="M539.4 58.2H557.8M539.4 62H557.8M539.4 65.8H557.8M544.2 54.4V69.6M548.8 54.4V69.6M553.4 54.4V69.6" stroke="#d9d9d9" stroke-width=".8"/>
<path d="M560.8 58.2L561.1999999999999 62.800000000000004L555.4 68.8L553.0 66.60000000000001Z" fill="#6e6e6e"/><path d="M552.8 66.8L555.4 69.2C555.1999999999999 72.60000000000001 549.8 74.2 544.4 74.6C547.1999999999999 72.2 549.1999999999999 68.2 552.8 66.8Z" fill="#3f86d2"/><circle cx="551.8" cy="70.2" r="1.6" fill="#fff"/>
<path d="M558.6 93L562.6 93L560.6 95.2Z" fill="#555"/>
<rect x="576.4" y="53.8" width="19" height="15" fill="#fff" stroke="#8a8a8a" stroke-width=".9"/><path d="M576.4 57.4H595.4M576.4 65.4H595.4M580.6 53.8V68.8M591.6 53.8V68.8" stroke="#c9c9c9" stroke-width=".8"/><rect x="581" y="57.8" width="10.2" height="7.2" fill="#bcd3ee"/>
<path d="M597.8 57.4L598.1999999999999 62.0L592.4 68.0L590.0 65.8Z" fill="#6e6e6e"/><path d="M589.8 66.0L592.4 68.4C592.1999999999999 71.8 586.8 73.4 581.4 73.8C584.1999999999999 71.4 586.1999999999999 67.4 589.8 66.0Z" fill="#3f86d2"/><circle cx="588.8" cy="69.4" r="1.6" fill="#fff"/>
<path d="M596 93L600 93L598 95.2Z" fill="#555"/>
<path d="M611 51.6H616.8V54.0H611Z M613.9 51.6V54.0 M611 59.0H616.8V62.8H611Z M611 60.900000000000006H616.8 M613.9 59.0V62.8" fill="none" stroke="#8a8a8a" stroke-width=".8"/>
<rect x="616.6" y="55.5" width="5.8" height="2.4" fill="#fff" stroke="#8a8a8a" stroke-width=".8"/><path d="M619.5 55.5V57.9" stroke="#9cbfe8" stroke-width=".8"/><path d="M615.4 56.7H611.2M613 54.9L611 56.7L613 58.5" fill="none" stroke="#2f6fbe" stroke-width="1.1"/>
<path d="M653 56.6L657 56.6L655 58.800000000000004Z" fill="#555"/>
<path d="M611 68.4H616.8V70.80000000000001H611Z M613.9 68.4V70.80000000000001 M611 75.80000000000001H616.8V79.60000000000001H611Z M611 77.7H616.8 M613.9 75.80000000000001V79.60000000000001" fill="none" stroke="#8a8a8a" stroke-width=".8"/>
<path d="M617.4 71.4L622.4 76.4M622.4 71.4L617.4 76.4" stroke="#e0603a" stroke-width="1.3"/><path d="M612.2 72.8L615.2 74.2L612.2 75.6" fill="none" stroke="#2f6fbe" stroke-width=".9"/>
<path d="M656 73.6L660 73.6L658 75.8Z" fill="#555"/>
<rect x="611" y="88.4" width="11" height="7.6" fill="#fff" stroke="#8a8a8a" stroke-width=".9"/><path d="M614.6 88.4V96M618.6 88.4V96M611 92.2H622" stroke="#b0b0b0" stroke-width=".8"/><rect x="613.4" y="90.2" width="3.6" height="3.4" fill="#2f6fbe"/><path d="M611 86.2H622M611 85V87.4M622 85V87.4M614.6 85.4V87M618.4 85.4V87" stroke="#2f6fbe" stroke-width=".8"/><path d="M612 97H620.6" stroke="#8a8a8a" stroke-width=".8"/>
<path d="M654.8 90.6L658.8 90.6L656.8 92.8Z" fill="#555"/>
<path d="M683 54V52.2H673.4L678.4 57L673.4 61.8H683V60" fill="none" stroke="#333" stroke-width="1.5"/>
<path d="M688.8 56.6L692.8 56.6L690.8 58.800000000000004Z" fill="#555"/>
<rect x="673.4" y="69" width="10" height="10.4" fill="#fff" stroke="#777" stroke-width=".9"/><rect x="673.4" y="69" width="10" height="2" fill="#777"/><path d="M678.4 72.4V77.4M676 75.2L678.4 77.6L680.8 75.2" fill="none" stroke="#2f6fbe" stroke-width="1.2"/>
<path d="M688.4 73.6L692.4 73.6L690.4 75.8Z" fill="#555"/>
<path d="M673.6 92.4L679.6 86.8L682.8 90.2L676.8 95.6Z" fill="#ee7f96"/><path d="M673.6 92.4L675.2 90.9L678.4 94.2L676.8 95.6Z" fill="#f6b4c1"/>
<path d="M688.4 90.2L692.4 90.2L690.4 92.4Z" fill="#555"/>
<path d="M709.6 59.2H722.2L717.4 64.2V69.6L714.6 67.8V64.2Z" fill="#777"/>
<path d="M720.6 93L724.6 93L722.6 95.2Z" fill="#555"/>
<circle cx="746.4" cy="60.2" r="6.3" fill="#fff" stroke="#3a78c2" stroke-width="1.8"/><path d="M742 65L734.2 71.8" stroke="#3a78c2" stroke-width="2.7" stroke-linecap="round"/>
<path d="M753.8 93L757.8 93L755.8 95.2Z" fill="#555"/>
<path d="M804 110.8L807 107.8L810 110.8" fill="none" stroke="#4a4a4a" stroke-width="1.5"/>
<path d="M80.2 133.4H85.8L83 136.4Z" fill="#666"/>
<rect x="104.7" y="132.4" width="1" height="1" fill="#999"/>
<rect x="104.7" y="135" width="1" height="1" fill="#999"/>
<rect x="104.7" y="137.6" width="1" height="1" fill="#999"/>
<rect x="104.7" y="140.2" width="1" height="1" fill="#999"/>
<path d="M130 132.2L139.4 140.6M139.4 132.2L130 140.6" stroke="#b4b4b4" stroke-width="1.1"/>
<path d="M161.2 137L164.8 140.4L172.2 132.2" fill="none" stroke="#b4b4b4" stroke-width="1.3"/>
</svg>
</body></html>
